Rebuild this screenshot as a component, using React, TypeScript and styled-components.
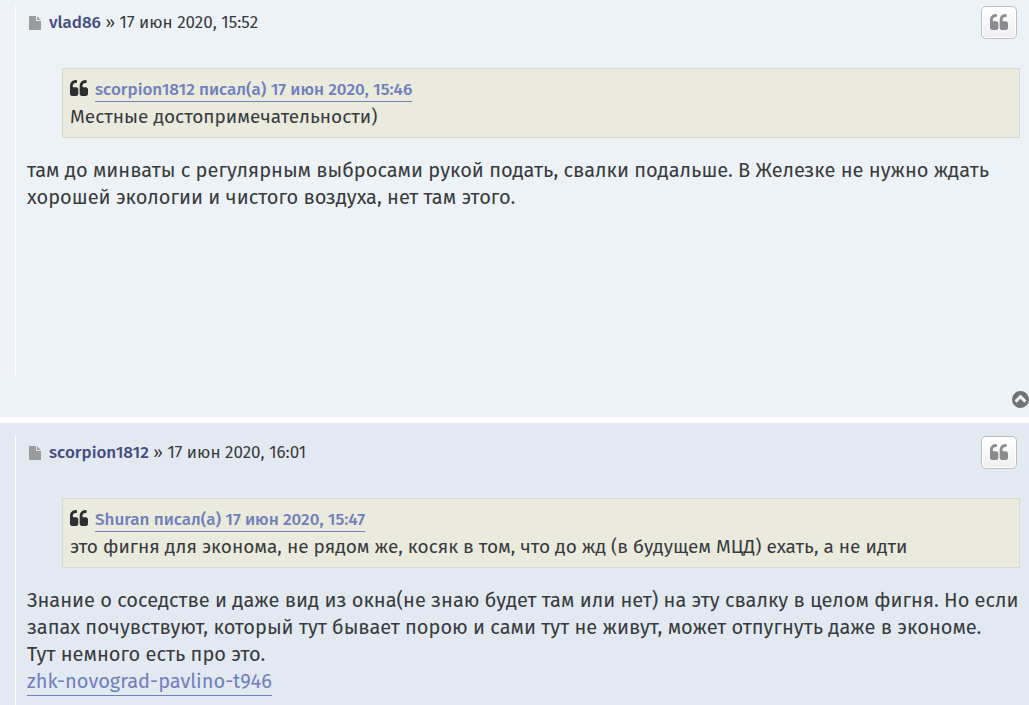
import React from "react";
import styled, { createGlobalStyle } from "styled-components";

const GlobalStyle = createGlobalStyle`
  *, *::before, *::after { box-sizing: border-box; }
  body {
    margin: 0;
    background: #fff;
    color: #383b3d;
    font-family: "Fira Sans", "Noto Sans", "Open Sans", sans-serif;
    font-weight: 400;
  }
`;

const Topic = styled.main`
  display: flex;
  flex-direction: column;
  gap: 6px;
  height: 100vh;
  overflow: hidden;
`;

const Post = styled.article<{ $tone: string; $top: number }>`
  flex: none;
  display: flex;
  flex-direction: column;
  background: ${(p) => p.$tone};
  padding: ${(p) => p.$top}px 0 6px 15px;
`;

const PostBody = styled.div`
  min-height: 370px;
  border-left: 1px solid #fff;
  padding: 0 9px 0 11px;
`;

const PostHeader = styled.header`
  display: flex;
  justify-content: space-between;
  align-items: flex-start;
  padding-right: 3px;
`;

const Author = styled.p`
  display: flex;
  align-items: center;
  margin: 0;
  font-size: 17px;
  line-height: 33px;
  white-space: pre;
`;

const UserLink = styled.a`
  color: #424c80;
  font-weight: 500;
  text-decoration: none;
  margin-left: 8px;
`;

const QuoteButton = styled.button`
  display: flex;
  align-items: center;
  justify-content: center;
  width: 36px;
  height: 33px;
  padding: 0 0 2px;
  border: 1px solid #bcbec1;
  border-radius: 5px;
  background: linear-gradient(#fff, #efeff1);
  box-shadow: inset 0 0 0 1px #fff;
  color: #8b8b8d;
  cursor: pointer;
`;

const Quote = styled.blockquote`
  margin: 29px 0 0 35px;
  min-height: 70px;
  padding: 7px 7px 6px;
  border: 1px solid #d7dacf;
  background: #eaeadd;
  font-size: 19px;
  line-height: 28px;
`;

const Cite = styled.div`
  display: flex;
  align-items: center;
  gap: 7px;
  height: 27px;
`;

const CiteLink = styled.a`
  color: #6f80bd;
  border-bottom: 1px solid #6f83b8;
  font-size: 17px;
  font-weight: 500;
  line-height: 23px;
  text-decoration: none;
`;

const Message = styled.div`
  margin-top: 19px;
  font-size: 20px;
  line-height: 27px;
  white-space: nowrap;
`;

const TopicLink = styled.a`
  display: inline-block;
  color: #6f80bd;
  border-bottom: 1px solid #6f83b8;
  text-decoration: none;
`;

const BackToTop = styled.div`
  display: flex;
  justify-content: flex-end;
  padding-top: 15px;
  height: 35px;

  a {
    display: block;
    height: 17px;
    color: #707274;
  }
`;

const Icon = styled.svg`
  display: block;
  flex: none;
  fill: currentColor;
`;

const FileIcon = styled(Icon)`
  color: #999b9d;
  margin: 1px 0 0 2px;
`;

const CiteIcon = styled.span`
  padding-bottom: 3px;
  color: #2c2e30;
`;

const QuoteMark = () => (
  <Icon width={18} height={16} viewBox="0 128 1664 1408" preserveAspectRatio="none" aria-hidden="true">
    <path d="M768 960v384q0 80-56 136t-136 56h-384q-80 0-136-56t-56-136v-704q0-104 40.500-198.500t109.500-163.500 163.500-109.500 198.500-40.500h64q26 0 45 19t19 45v128q0 26-19 45t-45 19h-64q-106 0-181 75t-75 181v32q0 40 28 68t68 28h224q80 0 136 56t56 136zM1664 960v384q0 80-56 136t-136 56h-384q-80 0-136-56t-56-136v-704q0-104 40.500-198.500t109.500-163.500 163.500-109.500 198.500-40.500h64q26 0 45 19t19 45v128q0 26-19 45t-45 19h-64q-106 0-181 75t-75 181v32q0 40 28 68t68 28h224q80 0 136 56t56 136z" />
  </Icon>
);

interface PostProps {
  tone: string;
  top: number;
  user: string;
  date: string;
  cite: string;
  quote: string;
  children: React.ReactNode;
}

const ForumPost = ({ tone, top, user, date, cite, quote, children }: PostProps) => (
  <Post $tone={tone} $top={top}>
    <PostBody>
      <PostHeader>
        <Author>
          <FileIcon width={12} height={14} viewBox="128 0 1536 1792" preserveAspectRatio="none" aria-hidden="true">
            <path d="M1152 512v-472q22 14 36 28l408 408q14 14 28 36h-472zm-128 32q0 40 28 68t68 28h544v1056q0 40-28 68t-68 28h-1344q-40 0-68-28t-28-68v-1600q0-40 28-68t68-28h800v544z" />
          </FileIcon>
          <UserLink href="#user">{user}</UserLink>
          <span> » {date}</span>
        </Author>
        <QuoteButton type="button" aria-label="Цитата">
          <QuoteMark />
        </QuoteButton>
      </PostHeader>
      <Quote>
        <Cite>
          <CiteIcon>
            <QuoteMark />
          </CiteIcon>
          <CiteLink href="#quoted">{cite}</CiteLink>
        </Cite>
        {quote}
      </Quote>
      <Message>{children}</Message>
    </PostBody>
    <BackToTop>
      <a href="#top" aria-label="Вернуться к началу">
        <Icon width={17} height={17} viewBox="128 128 1536 1536" aria-hidden="true">
          <path
            fillRule="evenodd"
            d="M1293 1139l102-102q19-19 19-45t-19-45l-454-454q-19-19-45-19t-45 19l-454 454q-19 19-19 45t19 45l102 102q19 19 45 19t45-19l307-307 307 307q19 19 45 19t45-19zM1664 896a768 768 0 1 1-1536 0a768 768 0 1 1 1536 0z"
          />
        </Icon>
      </a>
    </BackToTop>
  </Post>
);

export default function App() {
  return (
    <>
      <GlobalStyle />
      <Topic>
        <ForumPost
          tone="#ecf2f6"
          top={6}
          user="vlad86"
          date="17 июн 2020, 15:52"
          cite="scorpion1812 писал(а) 17 июн 2020, 15:46"
          quote="Местные достопримечательности)"
        >
          там до минваты с регулярным выбросами рукой подать, свалки подальше. В Железке не нужно ждать
          <br />
          хорошей экологии и чистого воздуха, нет там этого.
        </ForumPost>
        <ForumPost
          tone="#e2e9f1"
          top={13}
          user="scorpion1812"
          date="17 июн 2020, 16:01"
          cite="Shuran писал(а) 17 июн 2020, 15:47"
          quote="это фигня для эконома, не рядом же, косяк в том, что до жд (в будущем МЦД) ехать, а не идти"
        >
          Знание о соседстве и даже вид из окна(не знаю будет там или нет) на эту свалку в целом фигня. Но если
          <br />
          запах почувствуют, который тут бывает порою и сами тут не живут, может отпугнуть даже в экономе.
          <br />
          Тут немного есть про это.
          <br />
          <TopicLink href="#t946">zhk-novograd-pavlino-t946</TopicLink>
        </ForumPost>
      </Topic>
    </>
  );
}
